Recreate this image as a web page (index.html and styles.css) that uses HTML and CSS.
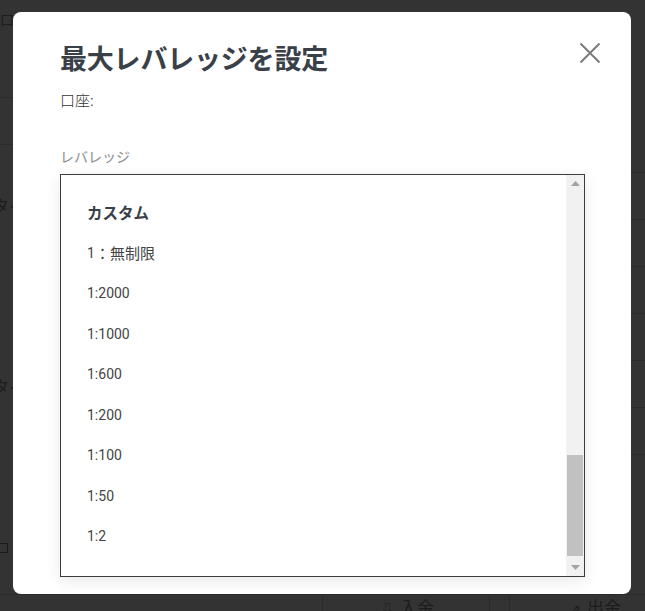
FILE: index.html
```html
<!DOCTYPE html>
<html lang="ja">
<head>
<meta charset="utf-8">
<title>最大レバレッジを設定</title>
<link rel="stylesheet" href="styles.css">
</head>
<body>
<div class="bg">
  <div class="bg-left">
    <div class="bg-block bg-b1"><span class="bg-text">口座番号</span></div>
    <div class="bg-block bg-b2"></div>
    <div class="bg-block bg-b3"><span class="bg-text bg-cut">タイプ</span></div>
    <div class="bg-block bg-b4"><span class="bg-text bg-cut">タイプ</span></div>
    <div class="bg-block bg-b5"><span class="bg-check"></span></div>
  </div>
  <div class="bg-right">
    <div class="bg-row bg-r0"></div>
    <div class="bg-row"></div>
    <div class="bg-row"></div>
    <div class="bg-row"></div>
    <div class="bg-row"></div>
    <div class="bg-row"></div>
    <div class="bg-row"></div>
  </div>
  <div class="bg-bar">
    <div class="bg-cell bg-spacer"></div>
    <div class="bg-cell bg-btn"><span class="bg-ico">⇩</span>入金</div>
    <div class="bg-cell bg-gap"></div>
    <div class="bg-cell bg-btn bg-btn2"><span class="bg-ico">⇗</span>出金</div>
  </div>
</div>

<div class="overlay">
  <div class="modal" role="dialog">
    <div class="modal-head">
      <h1 class="modal-title">最大レバレッジを設定</h1>
      <button class="close" aria-label="閉じる">
        <svg width="22" height="22" viewBox="0 0 22 22"><path d="M1.5 1.5 L20.5 20.5 M20.5 1.5 L1.5 20.5" stroke="#7a7a7a" stroke-width="2" fill="none"/></svg>
      </button>
    </div>
    <div class="account">口座:</div>
    <div class="field-label">レバレッジ</div>
    <div class="listbox">
      <ul class="options">
        <li class="opt opt-head">カスタム</li>
        <li class="opt">1<span class="ja">：無制限</span></li>
        <li class="opt">1:2000</li>
        <li class="opt">1:1000</li>
        <li class="opt">1:600</li>
        <li class="opt">1:200</li>
        <li class="opt">1:100</li>
        <li class="opt">1:50</li>
        <li class="opt">1:2</li>
      </ul>
      <div class="scrollbar">
        <div class="sb-btn sb-up"><svg width="9" height="5" viewBox="0 0 9 5"><path d="M0 5 L4.5 0 L9 5 Z" fill="#a3a3a3"/></svg></div>
        <div class="sb-track"><div class="sb-thumb"></div></div>
        <div class="sb-btn sb-down"><svg width="9" height="5" viewBox="0 0 9 5"><path d="M0 0 L4.5 5 L9 0 Z" fill="#a3a3a3"/></svg></div>
      </div>
    </div>
  </div>
</div>
</body>
</html>
```
FILE: styles.css
```css
* { box-sizing: border-box; }
html, body { margin: 0; padding: 0; }
body {
  width: 645px;
  height: 611px;
  overflow: hidden;
  background: #fff;
  font-family: Roboto, "Noto Sans CJK JP", sans-serif;
  color: #333;
}

/* background page (seen through the overlay) */
.bg {
  display: grid;
  grid-template-columns: 323px 1fr;
  grid-template-rows: 594px 1fr;
  height: 611px;
  color: #888;
}
.bg-left { display: flex; flex-direction: column; }
.bg-block { border-bottom: 1px solid #d8d8d8; }
.bg-b1 { height: 98px; padding-top: 10px; }
.bg-b2 { height: 47px; }
.bg-b3 { height: 175px; padding-top: 52px; border-bottom: none; }
.bg-b4 { height: 160px; padding-top: 58px; border-bottom: none; }
.bg-b5 { padding-top: 63px; border-bottom: none; }
.bg-text { font-size: 14px; line-height: 18px; color: #8a8a8a; white-space: nowrap; }
.bg-cut { display: inline-block; margin-left: -7px; font-size: 16px; }
.bg-check { display: block; width: 8px; height: 10px; border: 1px solid #888; border-left: none; }
.bg-right { display: flex; flex-direction: column; padding-top: 126px; }
.bg-row { height: 47px; border-bottom: 1px solid #d0d0d0; flex: none; }
.bg-r0 { height: 47px; }
.bg-bar { grid-column: 1 / 3; display: flex; border-top: 1px solid #d8d8d8; }
.bg-cell { border-right: 1px solid #d0d0d0; }
.bg-spacer { width: 323px; }
.bg-btn {
  width: 167px;
  padding-left: 58px;
  padding-top: 3px;
  font-size: 17px;
  line-height: 20px;
  color: #8a8a8a;
  white-space: nowrap;
}
.bg-btn2 { flex: 1; border-right: none; padding-left: 60px; }
.bg-gap { width: 20px; }
.bg-ico { font-size: 13px; margin-right: 6px; }

/* overlay + modal */
.overlay {
  position: fixed;
  inset: 0;
  background: rgba(0, 0, 0, 0.8);
  display: flex;
  justify-content: flex-start;
  align-items: flex-start;
  padding: 12px 0 0 13px;
}
.modal {
  width: 618px;
  background: #fff;
  border-radius: 8px;
  padding: 28px 46px 17px 47px;
}
.modal-head {
  display: flex;
  justify-content: space-between;
  align-items: flex-start;
}
.modal-title {
  margin: 0;
  font-family: "Noto Sans CJK JP", sans-serif;
  font-size: 27px;
  line-height: 36px;
  font-weight: 700;
  color: #394048;
  letter-spacing: -0.2px;
}
.close {
  width: 22px;
  height: 22px;
  padding: 0;
  margin: 2px -16px 0 0;
  border: none;
  background: none;
  display: flex;
}
.account {
  margin-top: 14px;
  font-family: "Noto Sans CJK JP", sans-serif;
  font-size: 15px;
  line-height: 20px;
  font-weight: 300;
  color: #333;
}
.field-label {
  margin-top: 36px;
  font-family: "Noto Sans CJK JP", sans-serif;
  font-size: 14px;
  line-height: 20px;
  color: #8c8c8c;
}
.listbox {
  margin-top: 8px;
  height: 403px;
  border: 1px solid #3b3b3b;
  display: flex;
  background: #fff;
  box-shadow: 0 4px 14px rgba(0, 0, 0, 0.09);
}
.options {
  list-style: none;
  margin: 0;
  padding: 17px 0 0 26px;
  flex: 1;
}
.opt {
  height: 40.5px;
  display: flex;
  align-items: center;
  font-size: 14px;
  color: #444;
}
.opt-head {
  font-family: "Noto Sans CJK JP", sans-serif;
  font-weight: 700;
  font-size: 15.5px;
  color: #394048;
}
.ja {
  font-family: "Noto Sans CJK JP", sans-serif;
  font-size: 15px;
}
.scrollbar {
  width: 18px;
  background: #f1f1f1;
  display: flex;
  flex-direction: column;
}
.sb-btn {
  height: 17px;
  display: flex;
  align-items: center;
  justify-content: center;
}
.sb-up { height: 20px; padding-bottom: 3px; }
.sb-down { height: 19px; padding-top: 2px; }
.sb-track {
  flex: 1;
  display: flex;
  flex-direction: column;
  justify-content: flex-end;
  padding: 0 1px 1px 1px;
}
.sb-thumb {
  height: 101px;
  background: #c1c1c1;
}
```
